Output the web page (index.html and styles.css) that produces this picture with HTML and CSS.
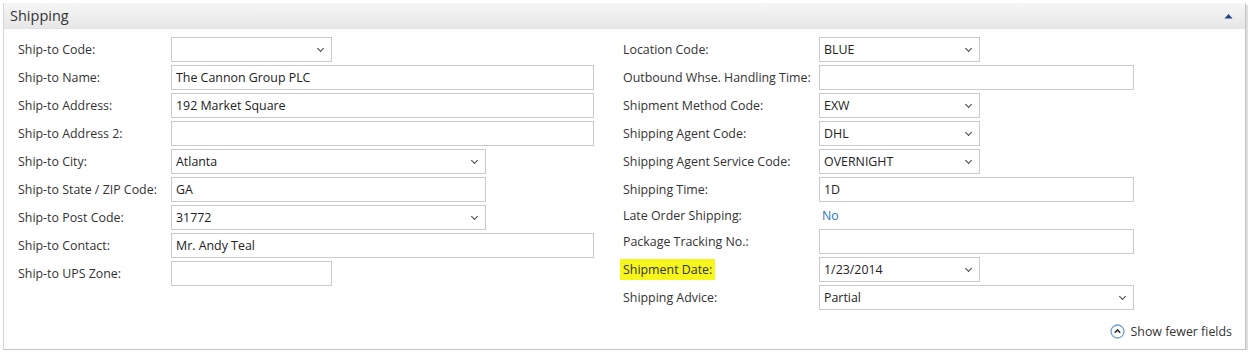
FILE: index.html
```html
<!DOCTYPE html>
<html lang="en">
<head>
  <meta charset="UTF-8" />
  <title>Shipping</title>
  <link rel="stylesheet" href="styles.css">
</head>
<body>

  <div class="panel">
    <div class="panel-header">
      <span class="panel-title">Shipping</span>
      <svg class="collapse" width="9" height="6" viewBox="0 0 9 6"><path d="M0.5 5.5 L4.5 1 L8.5 5.5 Z" fill="#1d3f8c"/></svg>
    </div>

    <div class="panel-body">
      <!-- Левая колонка -->
      <div class="column left">
        <div class="row"><label>Ship-to Code:</label><div class="field select w160"><span></span><i class="chev"></i></div></div>
        <div class="row"><label>Ship-to Name:</label><div class="field w422">The Cannon Group PLC</div></div>
        <div class="row"><label>Ship-to Address:</label><div class="field w422">192 Market Square</div></div>
        <div class="row"><label>Ship-to Address 2:</label><div class="field w422"></div></div>
        <div class="row"><label>Ship-to City:</label><div class="field select w314"><span>Atlanta</span><i class="chev"></i></div></div>
        <div class="row"><label>Ship-to State / ZIP Code:</label><div class="field w314">GA</div></div>
        <div class="row"><label>Ship-to Post Code:</label><div class="field select w314"><span>31772</span><i class="chev"></i></div></div>
        <div class="row"><label>Ship-to Contact:</label><div class="field w422">Mr. Andy Teal</div></div>
        <div class="row"><label>Ship-to UPS Zone:</label><div class="field w160"></div></div>
      </div>

      <!-- Правая колонка -->
      <div class="column right">
        <div class="row"><label>Location Code:</label><div class="field select w160"><span>BLUE</span><i class="chev"></i></div></div>
        <div class="row"><label>Outbound Whse. Handling Time:</label><div class="field w314"></div></div>
        <div class="row"><label>Shipment Method Code:</label><div class="field select w160"><span>EXW</span><i class="chev"></i></div></div>
        <div class="row"><label>Shipping Agent Code:</label><div class="field select w160"><span>DHL</span><i class="chev"></i></div></div>
        <div class="row"><label>Shipping Agent Service Code:</label><div class="field select w160"><span>OVERNIGHT</span><i class="chev"></i></div></div>
        <div class="row"><label>Shipping Time:</label><div class="field w314">1D</div></div>
        <div class="row short"><label>Late Order Shipping:</label><span class="link">No</span></div>
        <div class="row"><label>Package Tracking No.:</label><div class="field w314"></div></div>
        <div class="row"><label><mark>Shipment Date:</mark></label><div class="field select w160"><span>1/23/2014</span><i class="chev"></i></div></div>
        <div class="row"><label>Shipping Advice:</label><div class="field select w314"><span>Partial</span><i class="chev"></i></div></div>
      </div>
    </div>

    <div class="panel-footer">
      <span class="fewer">
        <svg width="15" height="15" viewBox="0 0 15 15"><circle cx="7.5" cy="7.5" r="6.5" fill="#fff" stroke="#6f9fd6" stroke-width="1.3"/><path d="M4.8 8.8 L7.5 6 L10.2 8.8" fill="none" stroke="#2b2b2b" stroke-width="1.6"/></svg>
        Show fewer fields
      </span>
    </div>
  </div>

</body>
</html>
```

FILE: styles.css
```css
* {
  box-sizing: border-box;
}

body {
  margin: 0;
  padding: 3px 0 0 3px;
  background: #fff;
  font-family: "Open Sans", "Noto Sans", sans-serif;
  font-size: 12.4px;
  color: #333;
}

.panel {
  width: 1243px;
  height: 347px;
  border-left: 1px solid #d6d6d6;
  border-right: 1px solid #c4c4c4;
  border-bottom: 1px solid #c4c4c4;
  box-shadow: 2px 2px 0 #dedede;
  display: flex;
  flex-direction: column;
}

.panel-header {
  height: 26px;
  padding: 0 8px 0 6px;
  display: flex;
  align-items: center;
  justify-content: space-between;
  background: linear-gradient(#f6f6f6, #e7e7e7);
  border-bottom: 1px solid #e2e2e2;
}

.panel-title {
  font-size: 14.5px;
  color: #333;
}

.collapse {
  margin-right: 4px;
}

.panel-body {
  display: flex;
  padding: 8px 0 0 14px;
}

.column.left {
  width: 605px;
}

.row {
  display: flex;
  align-items: center;
  height: 25px;
  margin-bottom: 3px;
}

.row.short {
  height: 21px;
}

.left label {
  width: 153px;
}

.right label {
  width: 196px;
}

label mark {
  background: #f6f51c;
  color: #333;
  padding: 2px 3px;
  margin-left: -3px;
}

.field {
  height: 25px;
  border: 1px solid #cbcbcb;
  background: #fff;
  padding: 0 4px;
  display: flex;
  align-items: center;
  color: #222;
}

.select {
  justify-content: space-between;
  padding-right: 8px;
}

.chev {
  width: 5px;
  height: 5px;
  border-right: 1.5px solid #444;
  border-bottom: 1.5px solid #444;
  transform: rotate(45deg);
  margin-top: -3px;
}

.w160 { width: 161px; }
.w314 { width: 315px; }
.w422 { width: 423px; }

.link {
  color: #2a79c8;
  padding-left: 3px;
}

.panel-footer {
  margin-top: auto;
  padding: 0 13px 9px 0;
  display: flex;
  justify-content: flex-end;
}

.fewer {
  display: flex;
  align-items: center;
  gap: 5px;
  color: #333;
}
```
